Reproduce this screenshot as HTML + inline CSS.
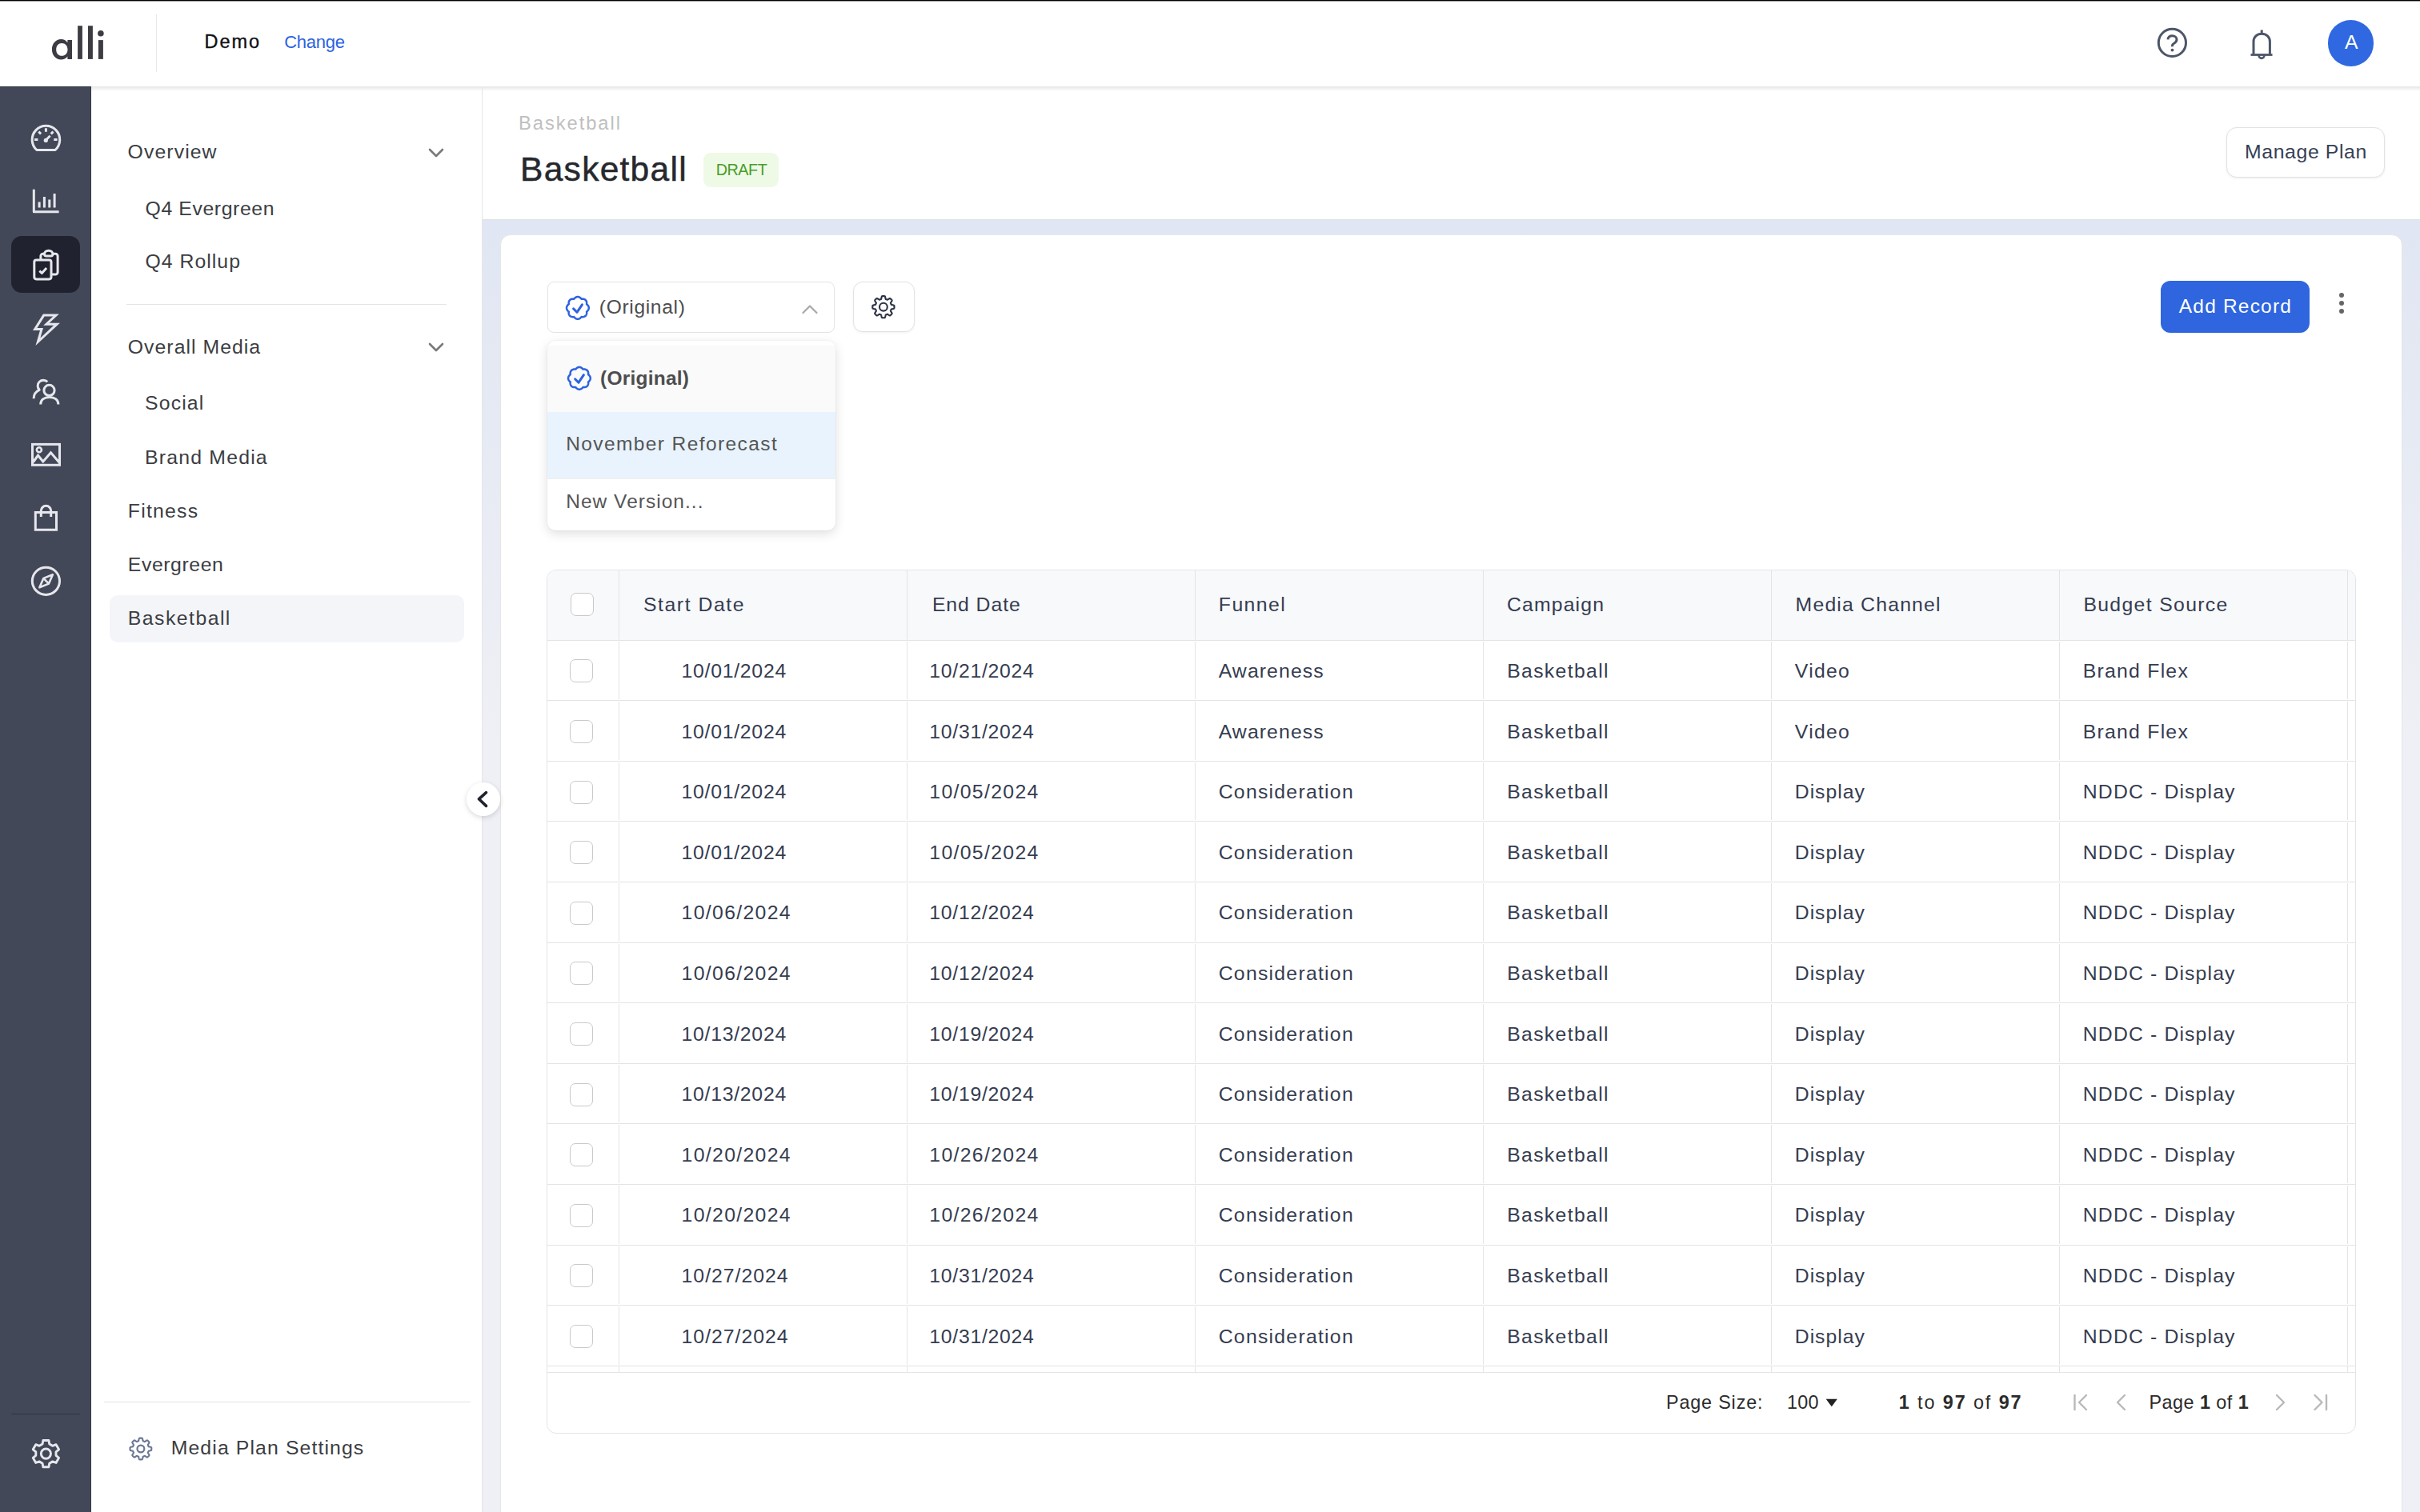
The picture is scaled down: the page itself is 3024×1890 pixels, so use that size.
<!DOCTYPE html><html><head><meta charset="utf-8"><style>
*{box-sizing:border-box;margin:0;padding:0}
html,body{width:3024px;height:1890px;overflow:hidden;background:#fff}
body{position:relative;font-family:"Liberation Sans",sans-serif}
.t{position:absolute;line-height:1;white-space:nowrap}
.a{position:absolute}
svg{position:absolute;overflow:visible}
</style></head><body><div class="a" style="left:0;top:0;width:3024px;height:1px;background:#000"></div>
<div class="a" style="left:0;top:1px;width:3024px;height:1px;background:#9a9a9a"></div>
<div class="a" style="left:0;top:108px;width:3024px;height:6px;background:linear-gradient(#e6e6e6,rgba(255,255,255,0))"></div>
<svg style="left:0;top:0" width="200" height="100" viewBox="0 0 200 100">
<g fill="#3c3d42">
<path fill-rule="evenodd" d="M76.2 49.1c-6.5 0-11.3 5.6-11.3 12.7s4.8 12.7 11.3 12.7c3.6 0 6.4-1.6 8.2-4.1v3.5h5.6V50.1h-5.6v3.1c-1.8-2.5-4.6-4.1-8.2-4.1zM77.2 54.1c4.2 0 7.3 3.2 7.3 7.8s-3.1 7.9-7.3 7.9-7-3.3-7-7.9 2.8-7.8 7-7.8z"/>
<rect x="97.1" y="32.2" width="5.8" height="41.7"/>
<rect x="110" y="32.2" width="5.9" height="41.7"/>
<rect x="122.9" y="50.1" width="6" height="23.8"/>
<circle cx="125.9" cy="41.7" r="3.8"/>
</g></svg>
<div class="a" style="left:195px;top:18px;width:1px;height:72px;background:#e8e8e8"></div>
<div class="t" style="left:255.6px;top:40.91px;font-size:23.5px;color:#111216;font-weight:normal;letter-spacing:1.967px;-webkit-text-stroke:0.35px #111216;">Demo</div>
<div class="t" style="left:355.2px;top:42.18px;font-size:22px;color:#2b63e0;font-weight:normal;letter-spacing:-0.273px;">Change</div>
<svg style="left:0;top:0" width="3024" height="100" viewBox="0 0 3024 100">
<g fill="none" stroke="#4d5568" stroke-width="3" stroke-linecap="round" stroke-linejoin="round">
<circle cx="2714.4" cy="53.4" r="17.1"/>
<path d="M2708.9 49.4c.4-2.8 2.7-4.6 5.6-4.6 3.1 0 5.5 2.1 5.5 4.8 0 2.3-1.4 3.6-3.4 4.7-1.5.8-2.2 1.8-2.2 3.4v.6" stroke-linecap="butt"/>
<path d="M2826.2 37.5v4M2816 67.4V52c0-5.8 4.5-9.8 10.2-9.8s10.2 4 10.2 9.8v15.4" stroke-linecap="butt"/>
<path d="M2812.5 68.5h27" stroke-width="2.8" stroke-linecap="butt"/>
<path d="M2822.6 69.5a3.4 3.4 0 0 0 6.8 0" stroke-width="2.6"/>
</g>
<circle cx="2714.5" cy="62.6" r="1.9" fill="#4d5568"/>
</svg>
<div class="a" style="left:2909px;top:25.3px;width:57.4px;height:57.4px;border-radius:50%;background:#2f68e0"></div>
<div class="t" style="left:2930.0px;top:41.09px;font-size:24.7px;color:#fff;font-weight:normal;letter-spacing:0px;">A</div>
<div class="a" style="left:0;top:108px;width:114px;height:1782px;background:#434859;border-top:1px solid #2c3040;border-right:1px solid #353949"></div>
<div class="a" style="left:14px;top:295px;width:86px;height:71px;border-radius:13px;background:#20232f"></div>

<svg style="left:0;top:108px" width="114" height="700" viewBox="0 108 114 700">
<g fill="none" stroke="#e6e7ec" stroke-width="3" stroke-linecap="butt" stroke-linejoin="round">
<!-- speedometer -->
<path d="M45.9 187.5A17.3 17.3 0 1 1 69 187.5Z"/>
<path d="M57.4 160.3v4.4M48.3 164.6l2.8 2.8M66.5 164.6l-2.8 2.8M43.1 174.5h4.3M67.3 174.5h4.3"/>
<path d="M57.3 175.3l5.3-5.6" stroke-width="2.8"/>
<circle cx="57.3" cy="175.4" r="2.6" fill="#e6e7ec" stroke="none"/>
<!-- bar chart -->
<path d="M42.3 236.8v28h31.3M49.1 259.4v-6.9M55.4 259.4v-13.5M61.8 259.4v-9.9M68.1 259.4v-17.3"/>
<!-- clipboard (active) -->
<path d="M50.9 325v-5a2.8 2.8 0 0 1 2.8-2.8h3.3M64 343h5.3a2.8 2.8 0 0 0 2.8-2.8V320a2.8 2.8 0 0 0-2.8-2.8h-3.3"/>
<path d="M55.5 317.5c0-2.5 2.2-4.3 5.2-4.3s5.2 1.8 5.2 4.3c0 1.4-.9 2.5-2.2 2.5h-6c-1.3 0-2.2-1.1-2.2-2.5z"/>
<rect x="42.8" y="325" width="21.2" height="23.9" rx="2.6"/>
<path d="M49.3 338.6l3 2.8 5.8-6.3"/>
<!-- lightning -->
<path d="M54.7 394.1h15.3l-12 11.1h13.1l-23.7 22.1 4.6-15.8h-8.3z" stroke-linejoin="miter"/>
<!-- people -->
<path d="M59.3 477.3a5.6 5.6 0 1 0-10.1 10c-4.3 2-7.1 6.1-7.1 10.9"/>
<circle cx="61.5" cy="487.9" r="6.6"/>
<path d="M50.7 505.5c0-6 5-9.1 11.1-9.1s11.1 3.1 11.1 9.1" stroke-linecap="butt"/>
<!-- image -->
<rect x="40.5" y="555.4" width="34" height="25.9" stroke-linejoin="miter"/>
<circle cx="48.9" cy="562.3" r="3" stroke-width="2.6"/>
<path d="M41.5 577.5l6-8.2 6.3 7.6 9.7-11.2 10.7 12.6" stroke-linejoin="miter"/>
<!-- bag -->
<path d="M44.3 640.6h26.2v21.7h-26.2z" stroke-linejoin="miter"/>
<path d="M51.3 646v-7.5a6.2 6.2 0 0 1 12.4 0v7.5"/>
<!-- compass -->
<circle cx="57.4" cy="726.3" r="17.1"/>
<path d="M49.4 734.2l4.9-11.3 11.6-4.6-4.9 11.3zM54.3 722.9l7.3 7.3" stroke-width="2.6"/>
</g></svg>
<div class="a" style="left:14px;top:1767px;width:86px;height:1px;background:#2f3342"></div>
<svg style="left:0;top:0" width="114" height="1890" viewBox="0 0 114 1890">
<path d="M53.06 1805.06 L53.87 1800.47 L60.93 1800.47 L61.74 1805.06 L65.66 1807.32 L70.03 1805.72 L73.57 1811.85 L70.00 1814.83 L70.00 1819.37 L73.57 1822.35 L70.03 1828.48 L65.66 1826.88 L61.74 1829.14 L60.93 1833.73 L53.87 1833.73 L53.06 1829.14 L49.14 1826.88 L44.77 1828.48 L41.23 1822.35 L44.80 1819.37 L44.80 1814.83 L41.23 1811.85 L44.77 1805.72 L49.14 1807.32Z" fill="none" stroke="#e6e7ec" stroke-width="2.9" stroke-linejoin="round"/>
<circle cx="57.4" cy="1817.1" r="6.1" fill="none" stroke="#e6e7ec" stroke-width="2.9"/>
</svg>
<div class="a" style="left:602px;top:108px;width:1px;height:1782px;background:#e6e6e6"></div>
<div class="t" style="left:159.6px;top:177.71px;font-size:24.8px;color:#3b3d42;font-weight:normal;letter-spacing:1.083px;">Overview</div>
<div class="t" style="left:181.5px;top:248.51px;font-size:24.8px;color:#3b3d42;font-weight:normal;letter-spacing:0.6px;">Q4 Evergreen</div>
<div class="t" style="left:181.5px;top:315.01px;font-size:24.8px;color:#3b3d42;font-weight:normal;letter-spacing:1.027px;">Q4 Rollup</div>
<div class="a" style="left:158px;top:380px;width:400px;height:1px;background:#e4e4e4"></div>
<div class="t" style="left:159.8px;top:421.91px;font-size:24.8px;color:#3b3d42;font-weight:normal;letter-spacing:1.032px;">Overall Media</div>
<div class="t" style="left:181.0px;top:492.21px;font-size:24.8px;color:#3b3d42;font-weight:normal;letter-spacing:1.149px;">Social</div>
<div class="t" style="left:181.0px;top:559.71px;font-size:24.8px;color:#3b3d42;font-weight:normal;letter-spacing:1.206px;">Brand Media</div>
<div class="a" style="left:137px;top:744px;width:443px;height:59px;border-radius:10px;background:#f4f5f9"></div>
<div class="t" style="left:159.8px;top:627.21px;font-size:24.8px;color:#3b3d42;font-weight:normal;letter-spacing:1.228px;">Fitness</div>
<div class="t" style="left:159.8px;top:694.41px;font-size:24.8px;color:#3b3d42;font-weight:normal;letter-spacing:0.572px;">Evergreen</div>
<div class="t" style="left:159.8px;top:760.81px;font-size:24.8px;color:#3b3d42;font-weight:normal;letter-spacing:1.464px;">Basketball</div>
<svg style="left:530px;top:179.8px" width="30" height="24" viewBox="0 0 30 24"><path d="M7 7l8 8 8-8" fill="none" stroke="#7a7a7a" stroke-width="2.6" stroke-linecap="round" stroke-linejoin="round"/></svg>
<svg style="left:530px;top:423.4px" width="30" height="24" viewBox="0 0 30 24"><path d="M7 7l8 8 8-8" fill="none" stroke="#7a7a7a" stroke-width="2.6" stroke-linecap="round" stroke-linejoin="round"/></svg>
<div class="a" style="left:130px;top:1752px;width:458px;height:1px;background:#e3e3e3"></div>
<svg style="left:0;top:0" width="600" height="1890" viewBox="0 0 600 1890">
<path d="M175.90 1797.60 L176.12 1797.60 L176.34 1797.61 L176.56 1797.62 L176.78 1797.63 L177.00 1797.64 L177.21 1797.66 L177.43 1797.69 L177.64 1797.77 L177.83 1797.99 L177.99 1798.32 L178.13 1798.74 L178.25 1799.21 L178.34 1799.69 L178.43 1800.17 L178.51 1800.60 L178.59 1800.96 L178.70 1801.21 L178.83 1801.33 L178.99 1801.38 L179.15 1801.44 L179.30 1801.49 L179.46 1801.55 L179.61 1801.61 L179.77 1801.67 L179.92 1801.73 L180.07 1801.80 L180.22 1801.87 L180.37 1801.94 L180.51 1802.02 L180.66 1802.09 L180.84 1802.10 L181.10 1802.00 L181.41 1801.80 L181.77 1801.55 L182.17 1801.28 L182.58 1801.00 L182.99 1800.75 L183.38 1800.56 L183.74 1800.43 L184.03 1800.41 L184.23 1800.50 L184.40 1800.64 L184.57 1800.78 L184.74 1800.93 L184.90 1801.07 L185.06 1801.22 L185.22 1801.37 L185.38 1801.52 L185.53 1801.68 L185.68 1801.84 L185.83 1802.00 L185.97 1802.16 L186.12 1802.33 L186.26 1802.50 L186.40 1802.67 L186.49 1802.87 L186.47 1803.16 L186.34 1803.52 L186.15 1803.91 L185.90 1804.32 L185.62 1804.73 L185.35 1805.13 L185.10 1805.49 L184.90 1805.80 L184.80 1806.06 L184.81 1806.24 L184.88 1806.39 L184.96 1806.53 L185.03 1806.68 L185.10 1806.83 L185.17 1806.98 L185.23 1807.13 L185.29 1807.29 L185.35 1807.44 L185.41 1807.60 L185.46 1807.75 L185.52 1807.91 L185.57 1808.07 L185.69 1808.20 L185.94 1808.31 L186.30 1808.39 L186.73 1808.47 L187.21 1808.56 L187.69 1808.65 L188.16 1808.77 L188.58 1808.91 L188.91 1809.07 L189.13 1809.26 L189.21 1809.47 L189.24 1809.69 L189.26 1809.90 L189.27 1810.12 L189.28 1810.34 L189.29 1810.56 L189.30 1810.78 L189.30 1811.00 L189.30 1811.22 L189.29 1811.44 L189.28 1811.66 L189.27 1811.88 L189.26 1812.10 L189.24 1812.31 L189.21 1812.53 L189.13 1812.74 L188.91 1812.93 L188.58 1813.09 L188.16 1813.23 L187.69 1813.35 L187.21 1813.44 L186.73 1813.53 L186.30 1813.61 L185.94 1813.69 L185.69 1813.80 L185.57 1813.93 L185.52 1814.09 L185.46 1814.25 L185.41 1814.40 L185.35 1814.56 L185.29 1814.71 L185.23 1814.87 L185.17 1815.02 L185.10 1815.17 L185.03 1815.32 L184.96 1815.47 L184.88 1815.61 L184.81 1815.76 L184.80 1815.94 L184.90 1816.20 L185.10 1816.51 L185.35 1816.87 L185.62 1817.27 L185.90 1817.68 L186.15 1818.09 L186.34 1818.48 L186.47 1818.84 L186.49 1819.13 L186.40 1819.33 L186.26 1819.50 L186.12 1819.67 L185.97 1819.84 L185.83 1820.00 L185.68 1820.16 L185.53 1820.32 L185.38 1820.48 L185.22 1820.63 L185.06 1820.78 L184.90 1820.93 L184.74 1821.07 L184.57 1821.22 L184.40 1821.36 L184.23 1821.50 L184.03 1821.59 L183.74 1821.57 L183.38 1821.44 L182.99 1821.25 L182.58 1821.00 L182.17 1820.72 L181.77 1820.45 L181.41 1820.20 L181.10 1820.00 L180.84 1819.90 L180.66 1819.91 L180.51 1819.98 L180.37 1820.06 L180.22 1820.13 L180.07 1820.20 L179.92 1820.27 L179.77 1820.33 L179.61 1820.39 L179.46 1820.45 L179.30 1820.51 L179.15 1820.56 L178.99 1820.62 L178.83 1820.67 L178.70 1820.79 L178.59 1821.04 L178.51 1821.40 L178.43 1821.83 L178.34 1822.31 L178.25 1822.79 L178.13 1823.26 L177.99 1823.68 L177.83 1824.01 L177.64 1824.23 L177.43 1824.31 L177.21 1824.34 L177.00 1824.36 L176.78 1824.37 L176.56 1824.38 L176.34 1824.39 L176.12 1824.40 L175.90 1824.40 L175.68 1824.40 L175.46 1824.39 L175.24 1824.38 L175.02 1824.37 L174.80 1824.36 L174.59 1824.34 L174.37 1824.31 L174.16 1824.23 L173.97 1824.01 L173.81 1823.68 L173.67 1823.26 L173.55 1822.79 L173.46 1822.31 L173.37 1821.83 L173.29 1821.40 L173.21 1821.04 L173.10 1820.79 L172.97 1820.67 L172.81 1820.62 L172.65 1820.56 L172.50 1820.51 L172.34 1820.45 L172.19 1820.39 L172.03 1820.33 L171.88 1820.27 L171.73 1820.20 L171.58 1820.13 L171.43 1820.06 L171.29 1819.98 L171.14 1819.91 L170.96 1819.90 L170.70 1820.00 L170.39 1820.20 L170.03 1820.45 L169.63 1820.72 L169.22 1821.00 L168.81 1821.25 L168.42 1821.44 L168.06 1821.57 L167.77 1821.59 L167.57 1821.50 L167.40 1821.36 L167.23 1821.22 L167.06 1821.07 L166.90 1820.93 L166.74 1820.78 L166.58 1820.63 L166.42 1820.48 L166.27 1820.32 L166.12 1820.16 L165.97 1820.00 L165.83 1819.84 L165.68 1819.67 L165.54 1819.50 L165.40 1819.33 L165.31 1819.13 L165.33 1818.84 L165.46 1818.48 L165.65 1818.09 L165.90 1817.68 L166.18 1817.27 L166.45 1816.87 L166.70 1816.51 L166.90 1816.20 L167.00 1815.94 L166.99 1815.76 L166.92 1815.61 L166.84 1815.47 L166.77 1815.32 L166.70 1815.17 L166.63 1815.02 L166.57 1814.87 L166.51 1814.71 L166.45 1814.56 L166.39 1814.40 L166.34 1814.25 L166.28 1814.09 L166.23 1813.93 L166.11 1813.80 L165.86 1813.69 L165.50 1813.61 L165.07 1813.53 L164.59 1813.44 L164.11 1813.35 L163.64 1813.23 L163.22 1813.09 L162.89 1812.93 L162.67 1812.74 L162.59 1812.53 L162.56 1812.31 L162.54 1812.10 L162.53 1811.88 L162.52 1811.66 L162.51 1811.44 L162.50 1811.22 L162.50 1811.00 L162.50 1810.78 L162.51 1810.56 L162.52 1810.34 L162.53 1810.12 L162.54 1809.90 L162.56 1809.69 L162.59 1809.47 L162.67 1809.26 L162.89 1809.07 L163.22 1808.91 L163.64 1808.77 L164.11 1808.65 L164.59 1808.56 L165.07 1808.47 L165.50 1808.39 L165.86 1808.31 L166.11 1808.20 L166.23 1808.07 L166.28 1807.91 L166.34 1807.75 L166.39 1807.60 L166.45 1807.44 L166.51 1807.29 L166.57 1807.13 L166.63 1806.98 L166.70 1806.83 L166.77 1806.68 L166.84 1806.53 L166.92 1806.39 L166.99 1806.24 L167.00 1806.06 L166.90 1805.80 L166.70 1805.49 L166.45 1805.13 L166.18 1804.73 L165.90 1804.32 L165.65 1803.91 L165.46 1803.52 L165.33 1803.16 L165.31 1802.87 L165.40 1802.67 L165.54 1802.50 L165.68 1802.33 L165.83 1802.16 L165.97 1802.00 L166.12 1801.84 L166.27 1801.68 L166.42 1801.52 L166.58 1801.37 L166.74 1801.22 L166.90 1801.07 L167.06 1800.93 L167.23 1800.78 L167.40 1800.64 L167.57 1800.50 L167.77 1800.41 L168.06 1800.43 L168.42 1800.56 L168.81 1800.75 L169.22 1801.00 L169.63 1801.28 L170.03 1801.55 L170.39 1801.80 L170.70 1802.00 L170.96 1802.10 L171.14 1802.09 L171.29 1802.02 L171.43 1801.94 L171.58 1801.87 L171.73 1801.80 L171.88 1801.73 L172.03 1801.67 L172.19 1801.61 L172.34 1801.55 L172.50 1801.49 L172.65 1801.44 L172.81 1801.38 L172.97 1801.33 L173.10 1801.21 L173.21 1800.96 L173.29 1800.60 L173.37 1800.17 L173.46 1799.69 L173.55 1799.21 L173.67 1798.74 L173.81 1798.32 L173.97 1797.99 L174.16 1797.77 L174.37 1797.69 L174.59 1797.66 L174.80 1797.64 L175.02 1797.63 L175.24 1797.62 L175.46 1797.61 L175.68 1797.60Z" fill="none" stroke="#6b7794" stroke-width="2.1" stroke-linejoin="round"/>
<circle cx="175.9" cy="1811" r="4.4" fill="none" stroke="#6b7794" stroke-width="2.2"/>
</svg>
<div class="t" style="left:213.7px;top:1798.41px;font-size:24.8px;color:#3b3d42;font-weight:normal;letter-spacing:1.113px;">Media Plan Settings</div>
<div class="t" style="left:648.1px;top:142.64px;font-size:23.7px;color:#bfbfbf;font-weight:normal;letter-spacing:1.95px;">Basketball</div>
<div class="t" style="left:650.1px;top:191.42px;font-size:42.5px;color:#26282d;font-weight:normal;letter-spacing:1.267px;-webkit-text-stroke:0.5px #26282d;">Basketball</div>
<div class="a" style="left:879px;top:191px;width:94px;height:43px;border-radius:9px;background:#eefae6"></div>
<div class="t" style="left:894.8px;top:202.54px;font-size:19.8px;color:#4a9c2a;font-weight:normal;letter-spacing:-0.498px;">DRAFT</div>
<div class="a" style="left:2782px;top:158.5px;width:198px;height:63.5px;border-radius:13px;background:#fff;border:1.5px solid #e2e2e2;box-shadow:0 1px 3px rgba(0,0,0,.07)"></div>
<div class="t" style="left:2805.0px;top:178.11px;font-size:24.8px;color:#363f55;font-weight:normal;letter-spacing:0.615px;">Manage Plan</div>
<div class="a" style="left:603px;top:274px;width:2421px;height:1616px;background:linear-gradient(#e0e6f3 0px,#eff0f5 650px,#eff0f5 100%);border-top:1px solid #e2e2e2"></div>
<div class="a" style="left:625px;top:293px;width:2377px;height:1620px;border-radius:13px;background:#fff;border:1px solid #e6e6e6"></div>
<div class="a" style="left:683.5px;top:351.5px;width:359px;height:64px;border-radius:8px;background:#fff;border:1.5px solid #e3e3e3"></div>
<svg style="left:0;top:0" width="1200" height="700" viewBox="0 0 1200 700"><path d="M733.08 389.53 L733.14 390.08 L733.18 390.65 L733.17 391.21 L733.12 391.78 L733.02 392.33 L732.87 392.87 L732.66 393.38 L732.40 393.87 L732.09 394.32 L731.73 394.73 L731.32 395.09 L730.87 395.40 L730.38 395.66 L729.87 395.87 L729.33 396.02 L728.78 396.12 L728.21 396.17 L727.65 396.18 L727.08 396.14 L726.53 396.08 L726.19 396.52 L725.81 396.94 L725.41 397.33 L724.97 397.69 L724.51 398.02 L724.02 398.29 L723.51 398.51 L722.98 398.67 L722.44 398.77 L721.90 398.80 L721.36 398.77 L720.82 398.67 L720.29 398.51 L719.78 398.29 L719.29 398.02 L718.83 397.69 L718.39 397.33 L717.99 396.94 L717.61 396.52 L717.27 396.08 L716.72 396.14 L716.15 396.18 L715.59 396.17 L715.02 396.12 L714.47 396.02 L713.93 395.87 L713.42 395.66 L712.93 395.40 L712.48 395.09 L712.07 394.73 L711.71 394.32 L711.40 393.87 L711.14 393.38 L710.93 392.87 L710.78 392.33 L710.68 391.78 L710.63 391.21 L710.62 390.65 L710.66 390.08 L710.72 389.53 L710.28 389.19 L709.86 388.81 L709.47 388.41 L709.11 387.97 L708.78 387.51 L708.51 387.02 L708.29 386.51 L708.13 385.98 L708.03 385.44 L708.00 384.90 L708.03 384.36 L708.13 383.82 L708.29 383.29 L708.51 382.78 L708.78 382.29 L709.11 381.83 L709.47 381.39 L709.86 380.99 L710.28 380.61 L710.72 380.27 L710.66 379.72 L710.62 379.15 L710.63 378.59 L710.68 378.02 L710.78 377.47 L710.93 376.93 L711.14 376.42 L711.40 375.93 L711.71 375.48 L712.07 375.07 L712.48 374.71 L712.93 374.40 L713.42 374.14 L713.93 373.93 L714.47 373.78 L715.02 373.68 L715.59 373.63 L716.15 373.62 L716.72 373.66 L717.27 373.72 L717.61 373.28 L717.99 372.86 L718.39 372.47 L718.83 372.11 L719.29 371.78 L719.78 371.51 L720.29 371.29 L720.82 371.13 L721.36 371.03 L721.90 371.00 L722.44 371.03 L722.98 371.13 L723.51 371.29 L724.02 371.51 L724.51 371.78 L724.97 372.11 L725.41 372.47 L725.81 372.86 L726.19 373.28 L726.53 373.72 L727.08 373.66 L727.65 373.62 L728.21 373.63 L728.78 373.68 L729.33 373.78 L729.87 373.93 L730.38 374.14 L730.87 374.40 L731.32 374.71 L731.73 375.07 L732.09 375.48 L732.40 375.93 L732.66 376.42 L732.87 376.93 L733.02 377.47 L733.12 378.02 L733.17 378.59 L733.18 379.15 L733.14 379.72 L733.08 380.27 L733.52 380.61 L733.94 380.99 L734.33 381.39 L734.69 381.83 L735.02 382.29 L735.29 382.78 L735.51 383.29 L735.67 383.82 L735.77 384.36 L735.80 384.90 L735.77 385.44 L735.67 385.98 L735.51 386.51 L735.29 387.02 L735.02 387.51 L734.69 387.97 L734.33 388.41 L733.94 388.81 L733.52 389.19 L733.08 389.53Z" fill="none" stroke="#2d62e0" stroke-width="2.5" stroke-linejoin="round"/><path d="M716.60 385.90l4.4 4.4 6.4-9.5" fill="none" stroke="#2d62e0" stroke-width="3" stroke-linecap="round" stroke-linejoin="round"/></svg>
<div class="t" style="left:748.8px;top:372.06px;font-size:24.5px;color:#4d4d4d;font-weight:normal;letter-spacing:0.695px;">(Original)</div>
<svg style="left:995px;top:374px" width="34" height="24" viewBox="0 0 34 24"><path d="M8.5 17l8.5-8.5 8.5 8.5" fill="none" stroke="#a8a8a8" stroke-width="2.2" stroke-linecap="round" stroke-linejoin="round"/></svg>
<div class="a" style="left:1066px;top:352px;width:77px;height:63px;border-radius:12px;background:#fff;border:1.5px solid #e3e3e3;box-shadow:0 1px 3px rgba(0,0,0,.06)"></div>
<svg style="left:0;top:0" width="1200" height="700" viewBox="0 0 1200 700">
<path d="M1103.90 370.10 L1104.12 370.10 L1104.34 370.11 L1104.57 370.12 L1104.79 370.13 L1105.01 370.15 L1105.23 370.17 L1105.45 370.19 L1105.67 370.27 L1105.86 370.50 L1106.02 370.84 L1106.16 371.27 L1106.28 371.75 L1106.37 372.25 L1106.46 372.74 L1106.53 373.18 L1106.62 373.55 L1106.72 373.81 L1106.86 373.94 L1107.02 373.99 L1107.18 374.04 L1107.34 374.10 L1107.49 374.15 L1107.65 374.21 L1107.80 374.28 L1107.96 374.34 L1108.11 374.41 L1108.26 374.48 L1108.41 374.55 L1108.56 374.63 L1108.71 374.70 L1108.89 374.71 L1109.15 374.60 L1109.47 374.40 L1109.84 374.14 L1110.25 373.86 L1110.67 373.57 L1111.09 373.31 L1111.49 373.11 L1111.85 372.98 L1112.15 372.95 L1112.35 373.05 L1112.53 373.19 L1112.70 373.33 L1112.87 373.47 L1113.03 373.62 L1113.20 373.77 L1113.36 373.93 L1113.52 374.08 L1113.67 374.24 L1113.83 374.40 L1113.98 374.57 L1114.13 374.73 L1114.27 374.90 L1114.41 375.07 L1114.55 375.25 L1114.65 375.45 L1114.62 375.75 L1114.49 376.11 L1114.29 376.51 L1114.03 376.93 L1113.74 377.35 L1113.46 377.76 L1113.20 378.13 L1113.00 378.45 L1112.89 378.71 L1112.90 378.89 L1112.97 379.04 L1113.05 379.19 L1113.12 379.34 L1113.19 379.49 L1113.26 379.64 L1113.32 379.80 L1113.39 379.95 L1113.45 380.11 L1113.50 380.26 L1113.56 380.42 L1113.61 380.58 L1113.66 380.74 L1113.79 380.88 L1114.05 380.98 L1114.42 381.07 L1114.86 381.14 L1115.35 381.23 L1115.85 381.32 L1116.33 381.44 L1116.76 381.58 L1117.10 381.74 L1117.33 381.93 L1117.41 382.15 L1117.43 382.37 L1117.45 382.59 L1117.47 382.81 L1117.48 383.03 L1117.49 383.26 L1117.50 383.48 L1117.50 383.70 L1117.50 383.92 L1117.49 384.14 L1117.48 384.37 L1117.47 384.59 L1117.45 384.81 L1117.43 385.03 L1117.41 385.25 L1117.33 385.47 L1117.10 385.66 L1116.76 385.82 L1116.33 385.96 L1115.85 386.08 L1115.35 386.17 L1114.86 386.26 L1114.42 386.33 L1114.05 386.42 L1113.79 386.52 L1113.66 386.66 L1113.61 386.82 L1113.56 386.98 L1113.50 387.14 L1113.45 387.29 L1113.39 387.45 L1113.32 387.60 L1113.26 387.76 L1113.19 387.91 L1113.12 388.06 L1113.05 388.21 L1112.97 388.36 L1112.90 388.51 L1112.89 388.69 L1113.00 388.95 L1113.20 389.27 L1113.46 389.64 L1113.74 390.05 L1114.03 390.47 L1114.29 390.89 L1114.49 391.29 L1114.62 391.65 L1114.65 391.95 L1114.55 392.15 L1114.41 392.33 L1114.27 392.50 L1114.13 392.67 L1113.98 392.83 L1113.83 393.00 L1113.67 393.16 L1113.52 393.32 L1113.36 393.47 L1113.20 393.63 L1113.03 393.78 L1112.87 393.93 L1112.70 394.07 L1112.53 394.21 L1112.35 394.35 L1112.15 394.45 L1111.85 394.42 L1111.49 394.29 L1111.09 394.09 L1110.67 393.83 L1110.25 393.54 L1109.84 393.26 L1109.47 393.00 L1109.15 392.80 L1108.89 392.69 L1108.71 392.70 L1108.56 392.77 L1108.41 392.85 L1108.26 392.92 L1108.11 392.99 L1107.96 393.06 L1107.80 393.12 L1107.65 393.19 L1107.49 393.25 L1107.34 393.30 L1107.18 393.36 L1107.02 393.41 L1106.86 393.46 L1106.72 393.59 L1106.62 393.85 L1106.53 394.22 L1106.46 394.66 L1106.37 395.15 L1106.28 395.65 L1106.16 396.13 L1106.02 396.56 L1105.86 396.90 L1105.67 397.13 L1105.45 397.21 L1105.23 397.23 L1105.01 397.25 L1104.79 397.27 L1104.57 397.28 L1104.34 397.29 L1104.12 397.30 L1103.90 397.30 L1103.68 397.30 L1103.46 397.29 L1103.23 397.28 L1103.01 397.27 L1102.79 397.25 L1102.57 397.23 L1102.35 397.21 L1102.13 397.13 L1101.94 396.90 L1101.78 396.56 L1101.64 396.13 L1101.52 395.65 L1101.43 395.15 L1101.34 394.66 L1101.27 394.22 L1101.18 393.85 L1101.08 393.59 L1100.94 393.46 L1100.78 393.41 L1100.62 393.36 L1100.46 393.30 L1100.31 393.25 L1100.15 393.19 L1100.00 393.12 L1099.84 393.06 L1099.69 392.99 L1099.54 392.92 L1099.39 392.85 L1099.24 392.77 L1099.09 392.70 L1098.91 392.69 L1098.65 392.80 L1098.33 393.00 L1097.96 393.26 L1097.55 393.54 L1097.13 393.83 L1096.71 394.09 L1096.31 394.29 L1095.95 394.42 L1095.65 394.45 L1095.45 394.35 L1095.27 394.21 L1095.10 394.07 L1094.93 393.93 L1094.77 393.78 L1094.60 393.63 L1094.44 393.47 L1094.28 393.32 L1094.13 393.16 L1093.97 393.00 L1093.82 392.83 L1093.67 392.67 L1093.53 392.50 L1093.39 392.33 L1093.25 392.15 L1093.15 391.95 L1093.18 391.65 L1093.31 391.29 L1093.51 390.89 L1093.77 390.47 L1094.06 390.05 L1094.34 389.64 L1094.60 389.27 L1094.80 388.95 L1094.91 388.69 L1094.90 388.51 L1094.83 388.36 L1094.75 388.21 L1094.68 388.06 L1094.61 387.91 L1094.54 387.76 L1094.48 387.60 L1094.41 387.45 L1094.35 387.29 L1094.30 387.14 L1094.24 386.98 L1094.19 386.82 L1094.14 386.66 L1094.01 386.52 L1093.75 386.42 L1093.38 386.33 L1092.94 386.26 L1092.45 386.17 L1091.95 386.08 L1091.47 385.96 L1091.04 385.82 L1090.70 385.66 L1090.47 385.47 L1090.39 385.25 L1090.37 385.03 L1090.35 384.81 L1090.33 384.59 L1090.32 384.37 L1090.31 384.14 L1090.30 383.92 L1090.30 383.70 L1090.30 383.48 L1090.31 383.26 L1090.32 383.03 L1090.33 382.81 L1090.35 382.59 L1090.37 382.37 L1090.39 382.15 L1090.47 381.93 L1090.70 381.74 L1091.04 381.58 L1091.47 381.44 L1091.95 381.32 L1092.45 381.23 L1092.94 381.14 L1093.38 381.07 L1093.75 380.98 L1094.01 380.88 L1094.14 380.74 L1094.19 380.58 L1094.24 380.42 L1094.30 380.26 L1094.35 380.11 L1094.41 379.95 L1094.48 379.80 L1094.54 379.64 L1094.61 379.49 L1094.68 379.34 L1094.75 379.19 L1094.83 379.04 L1094.90 378.89 L1094.91 378.71 L1094.80 378.45 L1094.60 378.13 L1094.34 377.76 L1094.06 377.35 L1093.77 376.93 L1093.51 376.51 L1093.31 376.11 L1093.18 375.75 L1093.15 375.45 L1093.25 375.25 L1093.39 375.07 L1093.53 374.90 L1093.67 374.73 L1093.82 374.57 L1093.97 374.40 L1094.13 374.24 L1094.28 374.08 L1094.44 373.93 L1094.60 373.77 L1094.77 373.62 L1094.93 373.47 L1095.10 373.33 L1095.27 373.19 L1095.45 373.05 L1095.65 372.95 L1095.95 372.98 L1096.31 373.11 L1096.71 373.31 L1097.13 373.57 L1097.55 373.86 L1097.96 374.14 L1098.33 374.40 L1098.65 374.60 L1098.91 374.71 L1099.09 374.70 L1099.24 374.63 L1099.39 374.55 L1099.54 374.48 L1099.69 374.41 L1099.84 374.34 L1100.00 374.28 L1100.15 374.21 L1100.31 374.15 L1100.46 374.10 L1100.62 374.04 L1100.78 373.99 L1100.94 373.94 L1101.08 373.81 L1101.18 373.55 L1101.27 373.18 L1101.34 372.74 L1101.43 372.25 L1101.52 371.75 L1101.64 371.27 L1101.78 370.84 L1101.94 370.50 L1102.13 370.27 L1102.35 370.19 L1102.57 370.17 L1102.79 370.15 L1103.01 370.13 L1103.23 370.12 L1103.46 370.11 L1103.68 370.10Z" fill="none" stroke="#2c3346" stroke-width="2.1" stroke-linejoin="round"/>
<circle cx="1103.9" cy="383.7" r="4.9" fill="none" stroke="#2c3346" stroke-width="2.1"/>
</svg>
<div class="a" style="left:2700px;top:351px;width:186px;height:65px;border-radius:12px;background:#2f66e0"></div>
<div class="t" style="left:2722.8px;top:371.26px;font-size:24.5px;color:#fff;font-weight:normal;letter-spacing:1.191px;">Add Record</div>
<div class="a" style="left:2923px;top:366px;width:6px;height:6px;border-radius:50%;background:#666"></div>
<div class="a" style="left:2923px;top:376px;width:6px;height:6px;border-radius:50%;background:#666"></div>
<div class="a" style="left:2923px;top:386px;width:6px;height:6px;border-radius:50%;background:#666"></div>
<div class="a" style="left:683px;top:712px;width:2261px;height:1080px;border-radius:12px;border:1px solid #e3e4e7;background:#fff;overflow:hidden">
<div class="a" style="left:0;top:0;width:100%;height:87px;background:#f8f9fb"></div>
<div class="a" style="left:0;top:87px;width:100%;height:1px;background:#e3e4e7"></div>
<div class="a" style="left:89px;top:89px;width:1px;height:72px;background:#e3e4e7"></div>
<div class="a" style="left:89px;top:164px;width:1px;height:73px;background:#e3e4e7"></div>
<div class="a" style="left:89px;top:240px;width:1px;height:72px;background:#e3e4e7"></div>
<div class="a" style="left:89px;top:315px;width:1px;height:73px;background:#e3e4e7"></div>
<div class="a" style="left:89px;top:391px;width:1px;height:73px;background:#e3e4e7"></div>
<div class="a" style="left:89px;top:467px;width:1px;height:72px;background:#e3e4e7"></div>
<div class="a" style="left:89px;top:542px;width:1px;height:73px;background:#e3e4e7"></div>
<div class="a" style="left:89px;top:618px;width:1px;height:72px;background:#e3e4e7"></div>
<div class="a" style="left:89px;top:693px;width:1px;height:73px;background:#e3e4e7"></div>
<div class="a" style="left:89px;top:769px;width:1px;height:73px;background:#e3e4e7"></div>
<div class="a" style="left:89px;top:845px;width:1px;height:72px;background:#e3e4e7"></div>
<div class="a" style="left:89px;top:920px;width:1px;height:73px;background:#e3e4e7"></div>
<div class="a" style="left:89px;top:995px;width:1px;height:7px;background:#e3e4e7"></div>
<div class="a" style="left:89px;top:0;width:1px;height:87px;background:#e3e4e7"></div>
<div class="a" style="left:449px;top:89px;width:1px;height:72px;background:#e3e4e7"></div>
<div class="a" style="left:449px;top:164px;width:1px;height:73px;background:#e3e4e7"></div>
<div class="a" style="left:449px;top:240px;width:1px;height:72px;background:#e3e4e7"></div>
<div class="a" style="left:449px;top:315px;width:1px;height:73px;background:#e3e4e7"></div>
<div class="a" style="left:449px;top:391px;width:1px;height:73px;background:#e3e4e7"></div>
<div class="a" style="left:449px;top:467px;width:1px;height:72px;background:#e3e4e7"></div>
<div class="a" style="left:449px;top:542px;width:1px;height:73px;background:#e3e4e7"></div>
<div class="a" style="left:449px;top:618px;width:1px;height:72px;background:#e3e4e7"></div>
<div class="a" style="left:449px;top:693px;width:1px;height:73px;background:#e3e4e7"></div>
<div class="a" style="left:449px;top:769px;width:1px;height:73px;background:#e3e4e7"></div>
<div class="a" style="left:449px;top:845px;width:1px;height:72px;background:#e3e4e7"></div>
<div class="a" style="left:449px;top:920px;width:1px;height:73px;background:#e3e4e7"></div>
<div class="a" style="left:449px;top:995px;width:1px;height:7px;background:#e3e4e7"></div>
<div class="a" style="left:449px;top:0;width:1px;height:87px;background:#e3e4e7"></div>
<div class="a" style="left:809px;top:89px;width:1px;height:72px;background:#e3e4e7"></div>
<div class="a" style="left:809px;top:164px;width:1px;height:73px;background:#e3e4e7"></div>
<div class="a" style="left:809px;top:240px;width:1px;height:72px;background:#e3e4e7"></div>
<div class="a" style="left:809px;top:315px;width:1px;height:73px;background:#e3e4e7"></div>
<div class="a" style="left:809px;top:391px;width:1px;height:73px;background:#e3e4e7"></div>
<div class="a" style="left:809px;top:467px;width:1px;height:72px;background:#e3e4e7"></div>
<div class="a" style="left:809px;top:542px;width:1px;height:73px;background:#e3e4e7"></div>
<div class="a" style="left:809px;top:618px;width:1px;height:72px;background:#e3e4e7"></div>
<div class="a" style="left:809px;top:693px;width:1px;height:73px;background:#e3e4e7"></div>
<div class="a" style="left:809px;top:769px;width:1px;height:73px;background:#e3e4e7"></div>
<div class="a" style="left:809px;top:845px;width:1px;height:72px;background:#e3e4e7"></div>
<div class="a" style="left:809px;top:920px;width:1px;height:73px;background:#e3e4e7"></div>
<div class="a" style="left:809px;top:995px;width:1px;height:7px;background:#e3e4e7"></div>
<div class="a" style="left:809px;top:0;width:1px;height:87px;background:#e3e4e7"></div>
<div class="a" style="left:1169px;top:89px;width:1px;height:72px;background:#e3e4e7"></div>
<div class="a" style="left:1169px;top:164px;width:1px;height:73px;background:#e3e4e7"></div>
<div class="a" style="left:1169px;top:240px;width:1px;height:72px;background:#e3e4e7"></div>
<div class="a" style="left:1169px;top:315px;width:1px;height:73px;background:#e3e4e7"></div>
<div class="a" style="left:1169px;top:391px;width:1px;height:73px;background:#e3e4e7"></div>
<div class="a" style="left:1169px;top:467px;width:1px;height:72px;background:#e3e4e7"></div>
<div class="a" style="left:1169px;top:542px;width:1px;height:73px;background:#e3e4e7"></div>
<div class="a" style="left:1169px;top:618px;width:1px;height:72px;background:#e3e4e7"></div>
<div class="a" style="left:1169px;top:693px;width:1px;height:73px;background:#e3e4e7"></div>
<div class="a" style="left:1169px;top:769px;width:1px;height:73px;background:#e3e4e7"></div>
<div class="a" style="left:1169px;top:845px;width:1px;height:72px;background:#e3e4e7"></div>
<div class="a" style="left:1169px;top:920px;width:1px;height:73px;background:#e3e4e7"></div>
<div class="a" style="left:1169px;top:995px;width:1px;height:7px;background:#e3e4e7"></div>
<div class="a" style="left:1169px;top:0;width:1px;height:87px;background:#e3e4e7"></div>
<div class="a" style="left:1529px;top:89px;width:1px;height:72px;background:#e3e4e7"></div>
<div class="a" style="left:1529px;top:164px;width:1px;height:73px;background:#e3e4e7"></div>
<div class="a" style="left:1529px;top:240px;width:1px;height:72px;background:#e3e4e7"></div>
<div class="a" style="left:1529px;top:315px;width:1px;height:73px;background:#e3e4e7"></div>
<div class="a" style="left:1529px;top:391px;width:1px;height:73px;background:#e3e4e7"></div>
<div class="a" style="left:1529px;top:467px;width:1px;height:72px;background:#e3e4e7"></div>
<div class="a" style="left:1529px;top:542px;width:1px;height:73px;background:#e3e4e7"></div>
<div class="a" style="left:1529px;top:618px;width:1px;height:72px;background:#e3e4e7"></div>
<div class="a" style="left:1529px;top:693px;width:1px;height:73px;background:#e3e4e7"></div>
<div class="a" style="left:1529px;top:769px;width:1px;height:73px;background:#e3e4e7"></div>
<div class="a" style="left:1529px;top:845px;width:1px;height:72px;background:#e3e4e7"></div>
<div class="a" style="left:1529px;top:920px;width:1px;height:73px;background:#e3e4e7"></div>
<div class="a" style="left:1529px;top:995px;width:1px;height:7px;background:#e3e4e7"></div>
<div class="a" style="left:1529px;top:0;width:1px;height:87px;background:#e3e4e7"></div>
<div class="a" style="left:1889px;top:89px;width:1px;height:72px;background:#e3e4e7"></div>
<div class="a" style="left:1889px;top:164px;width:1px;height:73px;background:#e3e4e7"></div>
<div class="a" style="left:1889px;top:240px;width:1px;height:72px;background:#e3e4e7"></div>
<div class="a" style="left:1889px;top:315px;width:1px;height:73px;background:#e3e4e7"></div>
<div class="a" style="left:1889px;top:391px;width:1px;height:73px;background:#e3e4e7"></div>
<div class="a" style="left:1889px;top:467px;width:1px;height:72px;background:#e3e4e7"></div>
<div class="a" style="left:1889px;top:542px;width:1px;height:73px;background:#e3e4e7"></div>
<div class="a" style="left:1889px;top:618px;width:1px;height:72px;background:#e3e4e7"></div>
<div class="a" style="left:1889px;top:693px;width:1px;height:73px;background:#e3e4e7"></div>
<div class="a" style="left:1889px;top:769px;width:1px;height:73px;background:#e3e4e7"></div>
<div class="a" style="left:1889px;top:845px;width:1px;height:72px;background:#e3e4e7"></div>
<div class="a" style="left:1889px;top:920px;width:1px;height:73px;background:#e3e4e7"></div>
<div class="a" style="left:1889px;top:995px;width:1px;height:7px;background:#e3e4e7"></div>
<div class="a" style="left:1889px;top:0;width:1px;height:87px;background:#e3e4e7"></div>
<div class="a" style="left:2249px;top:89px;width:1px;height:72px;background:#e3e4e7"></div>
<div class="a" style="left:2249px;top:164px;width:1px;height:73px;background:#e3e4e7"></div>
<div class="a" style="left:2249px;top:240px;width:1px;height:72px;background:#e3e4e7"></div>
<div class="a" style="left:2249px;top:315px;width:1px;height:73px;background:#e3e4e7"></div>
<div class="a" style="left:2249px;top:391px;width:1px;height:73px;background:#e3e4e7"></div>
<div class="a" style="left:2249px;top:467px;width:1px;height:72px;background:#e3e4e7"></div>
<div class="a" style="left:2249px;top:542px;width:1px;height:73px;background:#e3e4e7"></div>
<div class="a" style="left:2249px;top:618px;width:1px;height:72px;background:#e3e4e7"></div>
<div class="a" style="left:2249px;top:693px;width:1px;height:73px;background:#e3e4e7"></div>
<div class="a" style="left:2249px;top:769px;width:1px;height:73px;background:#e3e4e7"></div>
<div class="a" style="left:2249px;top:845px;width:1px;height:72px;background:#e3e4e7"></div>
<div class="a" style="left:2249px;top:920px;width:1px;height:73px;background:#e3e4e7"></div>
<div class="a" style="left:2249px;top:995px;width:1px;height:7px;background:#e3e4e7"></div>
<div class="a" style="left:2249px;top:0;width:1px;height:87px;background:#e3e4e7"></div>
<div class="a" style="left:0;top:162px;width:100%;height:1px;background:#e3e4e7"></div>
<div class="a" style="left:0;top:238px;width:100%;height:1px;background:#e3e4e7"></div>
<div class="a" style="left:0;top:313px;width:100%;height:1px;background:#e3e4e7"></div>
<div class="a" style="left:0;top:389px;width:100%;height:1px;background:#e3e4e7"></div>
<div class="a" style="left:0;top:465px;width:100%;height:1px;background:#e3e4e7"></div>
<div class="a" style="left:0;top:540px;width:100%;height:1px;background:#e3e4e7"></div>
<div class="a" style="left:0;top:616px;width:100%;height:1px;background:#e3e4e7"></div>
<div class="a" style="left:0;top:691px;width:100%;height:1px;background:#e3e4e7"></div>
<div class="a" style="left:0;top:767px;width:100%;height:1px;background:#e3e4e7"></div>
<div class="a" style="left:0;top:843px;width:100%;height:1px;background:#e3e4e7"></div>
<div class="a" style="left:0;top:918px;width:100%;height:1px;background:#e3e4e7"></div>
<div class="a" style="left:0;top:994px;width:100%;height:1px;background:#e3e4e7"></div>
<div class="a" style="left:0;top:1002px;width:100%;height:1px;background:#e3e4e7"></div>
</div>
<div class="a" style="left:713px;top:741px;width:29px;height:29px;border-radius:7px;border:1.5px solid #c9c9c9;background:#fff"></div>
<div class="t" style="left:804.0px;top:744.01px;font-size:24.8px;color:#353c50;font-weight:normal;letter-spacing:1.539px;">Start Date</div>
<div class="t" style="left:1164.9px;top:744.01px;font-size:24.8px;color:#353c50;font-weight:normal;letter-spacing:0.93px;">End Date</div>
<div class="t" style="left:1522.8px;top:744.01px;font-size:24.8px;color:#353c50;font-weight:normal;letter-spacing:1.432px;">Funnel</div>
<div class="t" style="left:1883.0px;top:744.01px;font-size:24.8px;color:#353c50;font-weight:normal;letter-spacing:1.137px;">Campaign</div>
<div class="t" style="left:2243.6px;top:744.01px;font-size:24.8px;color:#353c50;font-weight:normal;letter-spacing:1.181px;">Media Channel</div>
<div class="t" style="left:2603.4px;top:744.01px;font-size:24.8px;color:#353c50;font-weight:normal;letter-spacing:1.327px;">Budget Source</div>
<div class="a" style="left:712px;top:824.3px;width:29px;height:29px;border-radius:7px;border:1.5px solid #c9c9c9;background:#fff"></div>
<div class="t" style="left:851.6px;top:826.91px;font-size:24.8px;color:#353c50;font-weight:normal;letter-spacing:0.72px;">10/01/2024</div>
<div class="t" style="left:1161.3px;top:826.91px;font-size:24.8px;color:#353c50;font-weight:normal;letter-spacing:0.72px;">10/21/2024</div>
<div class="t" style="left:1522.7px;top:826.91px;font-size:24.8px;color:#353c50;font-weight:normal;letter-spacing:1.095px;">Awareness</div>
<div class="t" style="left:1883.2px;top:826.91px;font-size:24.8px;color:#353c50;font-weight:normal;letter-spacing:1.319px;">Basketball</div>
<div class="t" style="left:2242.8px;top:826.91px;font-size:24.8px;color:#353c50;font-weight:normal;letter-spacing:1.252px;">Video</div>
<div class="t" style="left:2602.8px;top:826.91px;font-size:24.8px;color:#353c50;font-weight:normal;letter-spacing:1.232px;">Brand Flex</div>
<div class="a" style="left:712px;top:899.9px;width:29px;height:29px;border-radius:7px;border:1.5px solid #c9c9c9;background:#fff"></div>
<div class="t" style="left:851.6px;top:902.51px;font-size:24.8px;color:#353c50;font-weight:normal;letter-spacing:0.72px;">10/01/2024</div>
<div class="t" style="left:1161.3px;top:902.51px;font-size:24.8px;color:#353c50;font-weight:normal;letter-spacing:0.72px;">10/31/2024</div>
<div class="t" style="left:1522.7px;top:902.51px;font-size:24.8px;color:#353c50;font-weight:normal;letter-spacing:1.095px;">Awareness</div>
<div class="t" style="left:1883.2px;top:902.51px;font-size:24.8px;color:#353c50;font-weight:normal;letter-spacing:1.319px;">Basketball</div>
<div class="t" style="left:2242.8px;top:902.51px;font-size:24.8px;color:#353c50;font-weight:normal;letter-spacing:1.252px;">Video</div>
<div class="t" style="left:2602.8px;top:902.51px;font-size:24.8px;color:#353c50;font-weight:normal;letter-spacing:1.232px;">Brand Flex</div>
<div class="a" style="left:712px;top:975.5px;width:29px;height:29px;border-radius:7px;border:1.5px solid #c9c9c9;background:#fff"></div>
<div class="t" style="left:851.6px;top:978.11px;font-size:24.8px;color:#353c50;font-weight:normal;letter-spacing:0.72px;">10/01/2024</div>
<div class="t" style="left:1161.3px;top:978.11px;font-size:24.8px;color:#353c50;font-weight:normal;letter-spacing:1.32px;">10/05/2024</div>
<div class="t" style="left:1522.7px;top:978.11px;font-size:24.8px;color:#353c50;font-weight:normal;letter-spacing:1.249px;">Consideration</div>
<div class="t" style="left:1883.2px;top:978.11px;font-size:24.8px;color:#353c50;font-weight:normal;letter-spacing:1.319px;">Basketball</div>
<div class="t" style="left:2242.8px;top:978.11px;font-size:24.8px;color:#353c50;font-weight:normal;letter-spacing:0.947px;">Display</div>
<div class="t" style="left:2602.8px;top:978.11px;font-size:24.8px;color:#353c50;font-weight:normal;letter-spacing:1.132px;">NDDC - Display</div>
<div class="a" style="left:712px;top:1051.1px;width:29px;height:29px;border-radius:7px;border:1.5px solid #c9c9c9;background:#fff"></div>
<div class="t" style="left:851.6px;top:1053.71px;font-size:24.8px;color:#353c50;font-weight:normal;letter-spacing:0.72px;">10/01/2024</div>
<div class="t" style="left:1161.3px;top:1053.71px;font-size:24.8px;color:#353c50;font-weight:normal;letter-spacing:1.32px;">10/05/2024</div>
<div class="t" style="left:1522.7px;top:1053.71px;font-size:24.8px;color:#353c50;font-weight:normal;letter-spacing:1.249px;">Consideration</div>
<div class="t" style="left:1883.2px;top:1053.71px;font-size:24.8px;color:#353c50;font-weight:normal;letter-spacing:1.319px;">Basketball</div>
<div class="t" style="left:2242.8px;top:1053.71px;font-size:24.8px;color:#353c50;font-weight:normal;letter-spacing:0.947px;">Display</div>
<div class="t" style="left:2602.8px;top:1053.71px;font-size:24.8px;color:#353c50;font-weight:normal;letter-spacing:1.132px;">NDDC - Display</div>
<div class="a" style="left:712px;top:1126.6999999999998px;width:29px;height:29px;border-radius:7px;border:1.5px solid #c9c9c9;background:#fff"></div>
<div class="t" style="left:851.6px;top:1129.31px;font-size:24.8px;color:#353c50;font-weight:normal;letter-spacing:1.32px;">10/06/2024</div>
<div class="t" style="left:1161.3px;top:1129.31px;font-size:24.8px;color:#353c50;font-weight:normal;letter-spacing:0.72px;">10/12/2024</div>
<div class="t" style="left:1522.7px;top:1129.31px;font-size:24.8px;color:#353c50;font-weight:normal;letter-spacing:1.249px;">Consideration</div>
<div class="t" style="left:1883.2px;top:1129.31px;font-size:24.8px;color:#353c50;font-weight:normal;letter-spacing:1.319px;">Basketball</div>
<div class="t" style="left:2242.8px;top:1129.31px;font-size:24.8px;color:#353c50;font-weight:normal;letter-spacing:0.947px;">Display</div>
<div class="t" style="left:2602.8px;top:1129.31px;font-size:24.8px;color:#353c50;font-weight:normal;letter-spacing:1.132px;">NDDC - Display</div>
<div class="a" style="left:712px;top:1202.3px;width:29px;height:29px;border-radius:7px;border:1.5px solid #c9c9c9;background:#fff"></div>
<div class="t" style="left:851.6px;top:1204.91px;font-size:24.8px;color:#353c50;font-weight:normal;letter-spacing:1.32px;">10/06/2024</div>
<div class="t" style="left:1161.3px;top:1204.91px;font-size:24.8px;color:#353c50;font-weight:normal;letter-spacing:0.72px;">10/12/2024</div>
<div class="t" style="left:1522.7px;top:1204.91px;font-size:24.8px;color:#353c50;font-weight:normal;letter-spacing:1.249px;">Consideration</div>
<div class="t" style="left:1883.2px;top:1204.91px;font-size:24.8px;color:#353c50;font-weight:normal;letter-spacing:1.319px;">Basketball</div>
<div class="t" style="left:2242.8px;top:1204.91px;font-size:24.8px;color:#353c50;font-weight:normal;letter-spacing:0.947px;">Display</div>
<div class="t" style="left:2602.8px;top:1204.91px;font-size:24.8px;color:#353c50;font-weight:normal;letter-spacing:1.132px;">NDDC - Display</div>
<div class="a" style="left:712px;top:1277.8999999999999px;width:29px;height:29px;border-radius:7px;border:1.5px solid #c9c9c9;background:#fff"></div>
<div class="t" style="left:851.6px;top:1280.51px;font-size:24.8px;color:#353c50;font-weight:normal;letter-spacing:0.72px;">10/13/2024</div>
<div class="t" style="left:1161.3px;top:1280.51px;font-size:24.8px;color:#353c50;font-weight:normal;letter-spacing:0.72px;">10/19/2024</div>
<div class="t" style="left:1522.7px;top:1280.51px;font-size:24.8px;color:#353c50;font-weight:normal;letter-spacing:1.249px;">Consideration</div>
<div class="t" style="left:1883.2px;top:1280.51px;font-size:24.8px;color:#353c50;font-weight:normal;letter-spacing:1.319px;">Basketball</div>
<div class="t" style="left:2242.8px;top:1280.51px;font-size:24.8px;color:#353c50;font-weight:normal;letter-spacing:0.947px;">Display</div>
<div class="t" style="left:2602.8px;top:1280.51px;font-size:24.8px;color:#353c50;font-weight:normal;letter-spacing:1.132px;">NDDC - Display</div>
<div class="a" style="left:712px;top:1353.5px;width:29px;height:29px;border-radius:7px;border:1.5px solid #c9c9c9;background:#fff"></div>
<div class="t" style="left:851.6px;top:1356.11px;font-size:24.8px;color:#353c50;font-weight:normal;letter-spacing:0.72px;">10/13/2024</div>
<div class="t" style="left:1161.3px;top:1356.11px;font-size:24.8px;color:#353c50;font-weight:normal;letter-spacing:0.72px;">10/19/2024</div>
<div class="t" style="left:1522.7px;top:1356.11px;font-size:24.8px;color:#353c50;font-weight:normal;letter-spacing:1.249px;">Consideration</div>
<div class="t" style="left:1883.2px;top:1356.11px;font-size:24.8px;color:#353c50;font-weight:normal;letter-spacing:1.319px;">Basketball</div>
<div class="t" style="left:2242.8px;top:1356.11px;font-size:24.8px;color:#353c50;font-weight:normal;letter-spacing:0.947px;">Display</div>
<div class="t" style="left:2602.8px;top:1356.11px;font-size:24.8px;color:#353c50;font-weight:normal;letter-spacing:1.132px;">NDDC - Display</div>
<div class="a" style="left:712px;top:1429.1px;width:29px;height:29px;border-radius:7px;border:1.5px solid #c9c9c9;background:#fff"></div>
<div class="t" style="left:851.6px;top:1431.71px;font-size:24.8px;color:#353c50;font-weight:normal;letter-spacing:1.32px;">10/20/2024</div>
<div class="t" style="left:1161.3px;top:1431.71px;font-size:24.8px;color:#353c50;font-weight:normal;letter-spacing:1.32px;">10/26/2024</div>
<div class="t" style="left:1522.7px;top:1431.71px;font-size:24.8px;color:#353c50;font-weight:normal;letter-spacing:1.249px;">Consideration</div>
<div class="t" style="left:1883.2px;top:1431.71px;font-size:24.8px;color:#353c50;font-weight:normal;letter-spacing:1.319px;">Basketball</div>
<div class="t" style="left:2242.8px;top:1431.71px;font-size:24.8px;color:#353c50;font-weight:normal;letter-spacing:0.947px;">Display</div>
<div class="t" style="left:2602.8px;top:1431.71px;font-size:24.8px;color:#353c50;font-weight:normal;letter-spacing:1.132px;">NDDC - Display</div>
<div class="a" style="left:712px;top:1504.6999999999998px;width:29px;height:29px;border-radius:7px;border:1.5px solid #c9c9c9;background:#fff"></div>
<div class="t" style="left:851.6px;top:1507.31px;font-size:24.8px;color:#353c50;font-weight:normal;letter-spacing:1.32px;">10/20/2024</div>
<div class="t" style="left:1161.3px;top:1507.31px;font-size:24.8px;color:#353c50;font-weight:normal;letter-spacing:1.32px;">10/26/2024</div>
<div class="t" style="left:1522.7px;top:1507.31px;font-size:24.8px;color:#353c50;font-weight:normal;letter-spacing:1.249px;">Consideration</div>
<div class="t" style="left:1883.2px;top:1507.31px;font-size:24.8px;color:#353c50;font-weight:normal;letter-spacing:1.319px;">Basketball</div>
<div class="t" style="left:2242.8px;top:1507.31px;font-size:24.8px;color:#353c50;font-weight:normal;letter-spacing:0.947px;">Display</div>
<div class="t" style="left:2602.8px;top:1507.31px;font-size:24.8px;color:#353c50;font-weight:normal;letter-spacing:1.132px;">NDDC - Display</div>
<div class="a" style="left:712px;top:1580.3px;width:29px;height:29px;border-radius:7px;border:1.5px solid #c9c9c9;background:#fff"></div>
<div class="t" style="left:851.6px;top:1582.91px;font-size:24.8px;color:#353c50;font-weight:normal;letter-spacing:0.986px;">10/27/2024</div>
<div class="t" style="left:1161.3px;top:1582.91px;font-size:24.8px;color:#353c50;font-weight:normal;letter-spacing:0.72px;">10/31/2024</div>
<div class="t" style="left:1522.7px;top:1582.91px;font-size:24.8px;color:#353c50;font-weight:normal;letter-spacing:1.249px;">Consideration</div>
<div class="t" style="left:1883.2px;top:1582.91px;font-size:24.8px;color:#353c50;font-weight:normal;letter-spacing:1.319px;">Basketball</div>
<div class="t" style="left:2242.8px;top:1582.91px;font-size:24.8px;color:#353c50;font-weight:normal;letter-spacing:0.947px;">Display</div>
<div class="t" style="left:2602.8px;top:1582.91px;font-size:24.8px;color:#353c50;font-weight:normal;letter-spacing:1.132px;">NDDC - Display</div>
<div class="a" style="left:712px;top:1655.8999999999999px;width:29px;height:29px;border-radius:7px;border:1.5px solid #c9c9c9;background:#fff"></div>
<div class="t" style="left:851.6px;top:1658.51px;font-size:24.8px;color:#353c50;font-weight:normal;letter-spacing:0.986px;">10/27/2024</div>
<div class="t" style="left:1161.3px;top:1658.51px;font-size:24.8px;color:#353c50;font-weight:normal;letter-spacing:0.72px;">10/31/2024</div>
<div class="t" style="left:1522.7px;top:1658.51px;font-size:24.8px;color:#353c50;font-weight:normal;letter-spacing:1.249px;">Consideration</div>
<div class="t" style="left:1883.2px;top:1658.51px;font-size:24.8px;color:#353c50;font-weight:normal;letter-spacing:1.319px;">Basketball</div>
<div class="t" style="left:2242.8px;top:1658.51px;font-size:24.8px;color:#353c50;font-weight:normal;letter-spacing:0.947px;">Display</div>
<div class="t" style="left:2602.8px;top:1658.51px;font-size:24.8px;color:#353c50;font-weight:normal;letter-spacing:1.132px;">NDDC - Display</div>
<div class="t" style="left:2082.0px;top:1741.99px;font-size:23.4px;color:#2b2b2b;font-weight:normal;letter-spacing:0.815px;">Page Size:</div>
<div class="t" style="left:2233.1px;top:1741.99px;font-size:23.4px;color:#2b2b2b;font-weight:normal;letter-spacing:0.234px;">100</div>
<svg style="left:2280px;top:1747px" width="18" height="14" viewBox="0 0 18 14"><path d="M1.7 1.8h14.2l-7.1 9.4z" fill="#222"/></svg>
<div class="t" style="left:2372.7000000000003px;top:1741.99px;font-size:23.4px;color:#2b2b2b;font-weight:normal;letter-spacing:1.9px;"><b>1</b> to <b>97</b> of <b>97</b></div>
<div class="t" style="left:2685.5px;top:1741.99px;font-size:23.4px;color:#2b2b2b;font-weight:normal;letter-spacing:0.45px;">Page <b>1</b> of <b>1</b></div>
<svg style="left:0;top:0" width="3024" height="1890" viewBox="0 0 3024 1890">
<g fill="none" stroke="#b9b9b9" stroke-width="2.4" stroke-linecap="round" stroke-linejoin="round">
<path d="M2592.5 1744v18M2607 1744l-9 9 9 9"/>
<path d="M2655 1744l-9 9 9 9"/>
<path d="M2845 1744l9 9-9 9"/>
<path d="M2892.5 1744l9 9-9 9M2907 1744v18"/>
</g></svg>
<div class="a" style="left:684px;top:425.5px;width:360px;height:237px;border-radius:10px;background:#fff;box-shadow:0 4px 14px rgba(0,0,0,.13),0 0 2px rgba(0,0,0,.08);overflow:hidden">
<div class="a" style="left:0;top:6.5px;width:100%;height:83px;background:#fafafa"></div>
<div class="a" style="left:0;top:89.5px;width:100%;height:83px;background:#e8f3fd"></div>
<div class="a" style="left:0;top:172.5px;width:100%;height:1px;background:#eeeeee"></div>
</div>
<div class="t" style="left:750.0px;top:460.76px;font-size:24.5px;color:#4d4d4d;font-weight:bold;letter-spacing:0.236px;">(Original)</div>
<div class="t" style="left:707.2px;top:543.16px;font-size:24.5px;color:#555;font-weight:normal;letter-spacing:1.401px;">November Reforecast</div>
<div class="t" style="left:707.2px;top:615.36px;font-size:24.5px;color:#555;font-weight:normal;letter-spacing:1.027px;">New Version...</div>
<svg style="left:0;top:0" width="1200" height="700" viewBox="0 0 1200 700"><path d="M735.08 477.43 L735.14 477.98 L735.18 478.55 L735.17 479.11 L735.12 479.68 L735.02 480.23 L734.87 480.77 L734.66 481.28 L734.40 481.77 L734.09 482.22 L733.73 482.63 L733.32 482.99 L732.87 483.30 L732.38 483.56 L731.87 483.77 L731.33 483.92 L730.78 484.02 L730.21 484.07 L729.65 484.08 L729.08 484.04 L728.53 483.98 L728.19 484.42 L727.81 484.84 L727.41 485.23 L726.97 485.59 L726.51 485.92 L726.02 486.19 L725.51 486.41 L724.98 486.57 L724.44 486.67 L723.90 486.70 L723.36 486.67 L722.82 486.57 L722.29 486.41 L721.78 486.19 L721.29 485.92 L720.83 485.59 L720.39 485.23 L719.99 484.84 L719.61 484.42 L719.27 483.98 L718.72 484.04 L718.15 484.08 L717.59 484.07 L717.02 484.02 L716.47 483.92 L715.93 483.77 L715.42 483.56 L714.93 483.30 L714.48 482.99 L714.07 482.63 L713.71 482.22 L713.40 481.77 L713.14 481.28 L712.93 480.77 L712.78 480.23 L712.68 479.68 L712.63 479.11 L712.62 478.55 L712.66 477.98 L712.72 477.43 L712.28 477.09 L711.86 476.71 L711.47 476.31 L711.11 475.87 L710.78 475.41 L710.51 474.92 L710.29 474.41 L710.13 473.88 L710.03 473.34 L710.00 472.80 L710.03 472.26 L710.13 471.72 L710.29 471.19 L710.51 470.68 L710.78 470.19 L711.11 469.73 L711.47 469.29 L711.86 468.89 L712.28 468.51 L712.72 468.17 L712.66 467.62 L712.62 467.05 L712.63 466.49 L712.68 465.92 L712.78 465.37 L712.93 464.83 L713.14 464.32 L713.40 463.83 L713.71 463.38 L714.07 462.97 L714.48 462.61 L714.93 462.30 L715.42 462.04 L715.93 461.83 L716.47 461.68 L717.02 461.58 L717.59 461.53 L718.15 461.52 L718.72 461.56 L719.27 461.62 L719.61 461.18 L719.99 460.76 L720.39 460.37 L720.83 460.01 L721.29 459.68 L721.78 459.41 L722.29 459.19 L722.82 459.03 L723.36 458.93 L723.90 458.90 L724.44 458.93 L724.98 459.03 L725.51 459.19 L726.02 459.41 L726.51 459.68 L726.97 460.01 L727.41 460.37 L727.81 460.76 L728.19 461.18 L728.53 461.62 L729.08 461.56 L729.65 461.52 L730.21 461.53 L730.78 461.58 L731.33 461.68 L731.87 461.83 L732.38 462.04 L732.87 462.30 L733.32 462.61 L733.73 462.97 L734.09 463.38 L734.40 463.83 L734.66 464.32 L734.87 464.83 L735.02 465.37 L735.12 465.92 L735.17 466.49 L735.18 467.05 L735.14 467.62 L735.08 468.17 L735.52 468.51 L735.94 468.89 L736.33 469.29 L736.69 469.73 L737.02 470.19 L737.29 470.68 L737.51 471.19 L737.67 471.72 L737.77 472.26 L737.80 472.80 L737.77 473.34 L737.67 473.88 L737.51 474.41 L737.29 474.92 L737.02 475.41 L736.69 475.87 L736.33 476.31 L735.94 476.71 L735.52 477.09 L735.08 477.43Z" fill="none" stroke="#2d62e0" stroke-width="2.5" stroke-linejoin="round"/><path d="M718.60 473.80l4.4 4.4 6.4-9.5" fill="none" stroke="#2d62e0" stroke-width="3" stroke-linecap="round" stroke-linejoin="round"/></svg>
<div class="a" style="left:582.5px;top:978px;width:42px;height:42px;border-radius:50%;background:#fff;box-shadow:0 2px 6px rgba(0,0,0,.15)"></div>
<svg style="left:590px;top:985px" width="28" height="28" viewBox="0 0 28 28"><path d="M17.5 5.6L8.4 13.8l9.1 8.6" fill="none" stroke="#1f2330" stroke-width="3.6" stroke-linecap="round" stroke-linejoin="round"/></svg></body></html>
